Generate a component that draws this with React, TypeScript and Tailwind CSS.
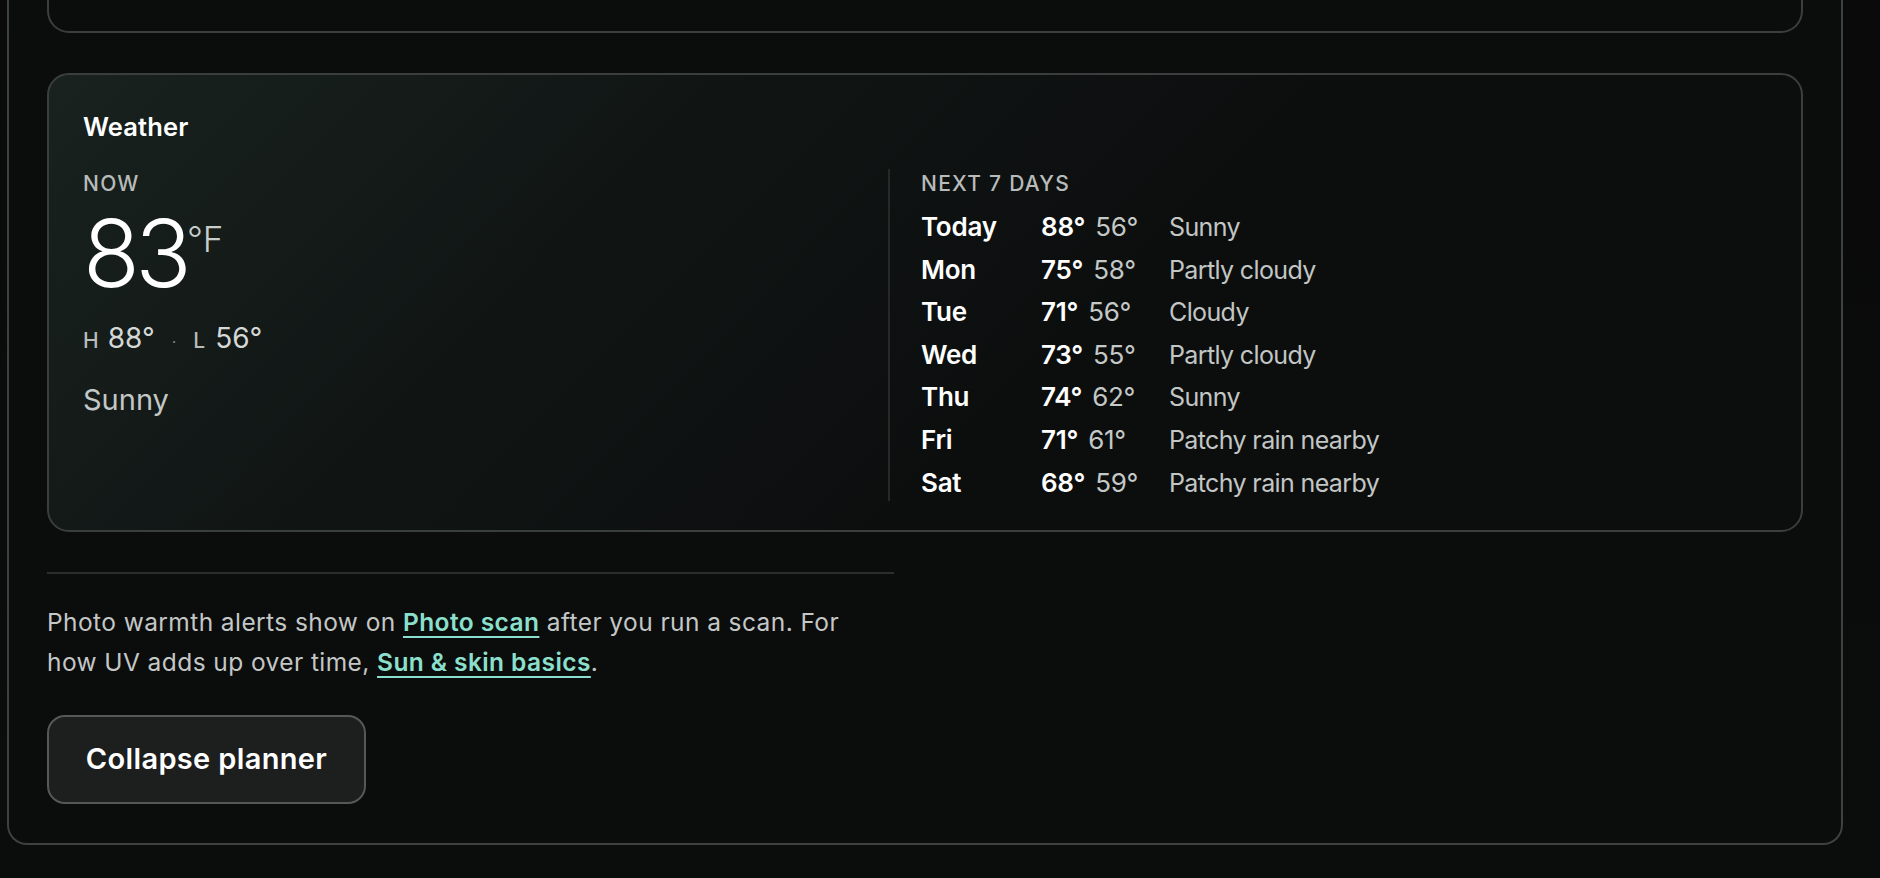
import React from 'react';

interface DayForecast {
  day: string;
  high: number;
  low: number;
  condition: string;
}

const forecast: DayForecast[] = [
  { day: 'Today', high: 88, low: 56, condition: 'Sunny' },
  { day: 'Mon', high: 75, low: 58, condition: 'Partly cloudy' },
  { day: 'Tue', high: 71, low: 56, condition: 'Cloudy' },
  { day: 'Wed', high: 73, low: 55, condition: 'Partly cloudy' },
  { day: 'Thu', high: 74, low: 62, condition: 'Sunny' },
  { day: 'Fri', high: 71, low: 61, condition: 'Patchy rain nearby' },
  { day: 'Sat', high: 68, low: 59, condition: 'Patchy rain nearby' },
];

const WeatherCard = () => (
  <section className="mt-[40px] rounded-[22px] border-2 border-[#3a3e3d] bg-[linear-gradient(135deg,#19221f_0%,#101514_32%,#0c0e0e_60%,#0c0d0d_100%)] px-[34px] pt-[34px] pb-[29px]">
    <h3 className="text-[25.5px] leading-[36px] font-semibold tracking-[0.005em] text-white">Weather</h3>
    <div className="mt-[24px] flex">
      <div className="w-[805px] shrink-0">
        <div className="text-[21px] leading-[30px] font-medium tracking-[0.06em] text-[#b7bcba] uppercase">Now</div>
        <div className="mt-[7px] flex items-start">
          <span className="text-[93px] leading-[95px] font-light tracking-[-0.05em] text-white">83</span>
          <span className="mt-[15px] text-[35px] leading-[36px] font-light text-[#c8cccb]">°F</span>
        </div>
        <div className="mt-[17px] flex items-baseline text-[28px] leading-[40px] text-[#d4d8d6]">
          <span className="mr-[9px] text-[21px] font-medium text-[#b7bcba]">H</span>
          <span>88°</span>
          <span className="mx-[17px] text-[16px] text-[#7d8281]">·</span>
          <span className="mr-[10px] text-[21px] font-medium text-[#b7bcba]">L</span>
          <span>56°</span>
        </div>
        <div className="mt-[17px] text-[29px] leading-[42px] text-[#c3c7c5]">Sunny</div>
      </div>
      <div className="flex-1 border-l-2 border-[#252928] pl-[31px]">
        <div className="text-[21px] leading-[30px] font-medium tracking-[0.06em] text-[#b7bcba] uppercase">Next 7 days</div>
        <ul className="mt-[10px] flex flex-col gap-[6.6px]">
          {forecast.map((f) => (
            <li key={f.day} className="flex text-[26px] leading-[36px]">
              <span className="w-[120px] font-semibold tracking-[-0.01em] text-white">{f.day}</span>
              <span className="flex w-[128px] gap-[10px] tracking-[-0.01em]">
                <span className="font-semibold text-white">{f.high}°</span>
                <span className="text-[#c4c8c6]">{f.low}°</span>
              </span>
              <span className="text-[25px] tracking-[-0.025em] text-[#c2c6c4]">{f.condition}</span>
            </li>
          ))}
        </ul>
      </div>
    </div>
  </section>
);

export default function App() {
  return (
    <div className="min-h-screen bg-[linear-gradient(180deg,#0a0a0a_0%,#0b0c0c_100%)] pb-[34px] font-['Inter',sans-serif]">
      <div className="ml-[7px] w-[1836px] rounded-b-[20px] border-x-2 border-b-2 border-[#3d4140] bg-[#0b0c0c] px-[38px] pb-[39px]">
        <div className="h-[33px] rounded-b-[22px] border-x-2 border-b-2 border-[#3a3e3d] bg-[#0b0c0c]" />
        <WeatherCard />
        <div className="mt-[40px] w-[847px] border-t-2 border-[#2b2e2d] pt-[28px]">
          <p className="w-[805px] text-[24.5px] leading-[40px] tracking-[0.017em] text-[#c3c7c5]">
            Photo warmth alerts show on{' '}
            <a href="#" className="font-semibold text-[#8be0cd] underline decoration-2 underline-offset-[5px]">
              Photo scan
            </a>{' '}
            after you run a scan. For how UV adds up over time,{' '}
            <a href="#" className="font-semibold text-[#8be0cd] underline decoration-2 underline-offset-[5px]">
              Sun &amp; skin basics
            </a>
            .
          </p>
        </div>
        <button className="mt-[33px] h-[89px] w-[319px] rounded-[18px] border-2 border-[#555857] bg-[#1d1e1e] text-[29px] font-semibold tracking-[0.012em] text-white">
          Collapse planner
        </button>
      </div>
    </div>
  );
}
